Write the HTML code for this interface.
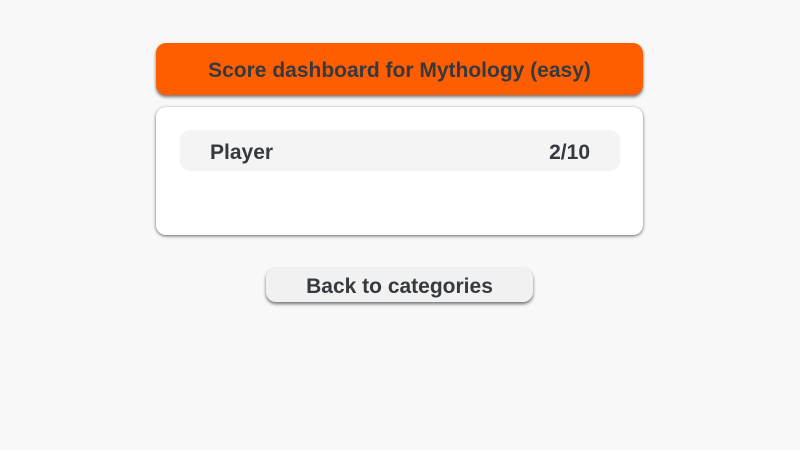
<!DOCTYPE html>
<html><head><style>
body{margin:0;width:800px;height:450px;background:#f8f8f8;font-family:"Liberation Sans",sans-serif;font-weight:bold;color:#36393e;position:relative;overflow:hidden}
.h{position:absolute;left:156px;top:43px;width:487px;height:52px;background:#ff5e00;border-radius:10px;box-shadow:0 2px 3px rgba(0,0,0,.55);text-align:center;line-height:56px;font-size:21px}
.c{position:absolute;left:156px;top:107px;width:487px;height:128px;background:#fff;border-radius:10px;box-shadow:0 1px 3px rgba(0,0,0,.6)}
.r{position:absolute;left:24px;top:23px;width:440px;height:41px;background:#f4f4f4;border-radius:10px;font-size:21px;line-height:46px}
.r .a{position:absolute;left:30px}.r .b{position:absolute;right:30px}
.bt{position:absolute;left:266px;top:268px;width:267px;height:34px;background:#f1f1f1;border-radius:10px;box-shadow:0 2px 3px rgba(0,0,0,.55);text-align:center;font-size:21px;line-height:38px}
</style></head><body>
<div class="h">Score dashboard for Mythology (easy)</div>
<div class="c"><div class="r"><span class="a">Player</span><span class="b">2/10</span></div></div>
<div class="bt">Back to categories</div>
</body></html>
